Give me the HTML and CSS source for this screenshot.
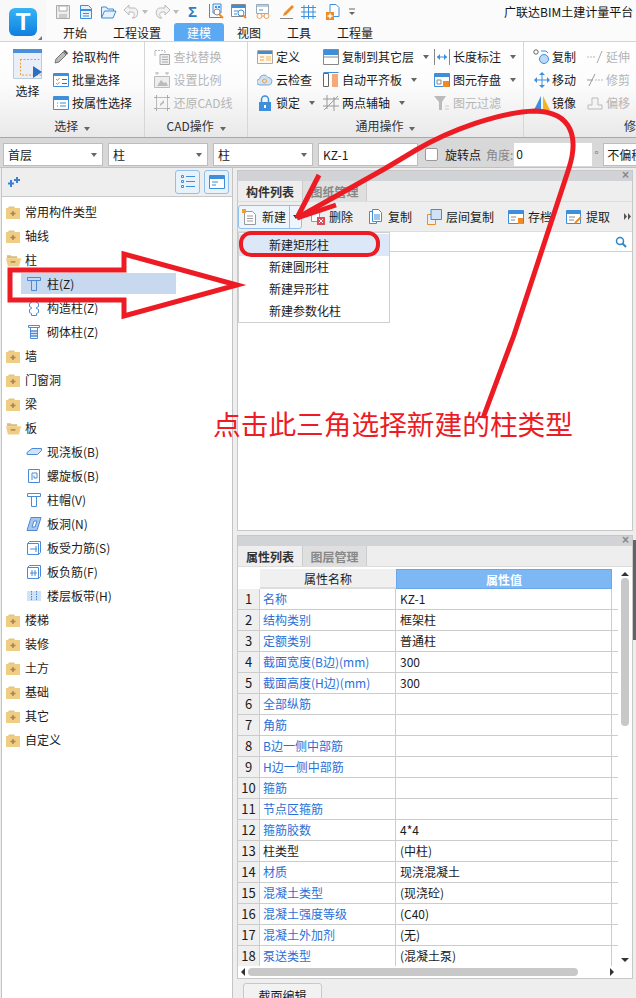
FILE: index.html
```html
<!DOCTYPE html>
<html lang="zh-CN">
<head>
  <meta charset="UTF-8" />
  <title>广联达BIM土建计量平台</title>
  <link rel="stylesheet" href="styles.css">
</head>
<body>
<svg class="defs" width="0" height="0">
  <symbol id="shut" viewBox="0 0 15 13"><path d="M2 2l1-1.500h5l1 1.500z" fill="#e3c48c"/><path d="M0 2h14v11H0z" fill="#f0cd84"/><path d="M4.500 7.500h5M7 5v5" stroke="#a88444" stroke-width="1.500"/></symbol>
  <symbol id="open" viewBox="0 0 16 13"><path d="M1 1h4l1 1h6v2H1z" fill="#dcbc82"/><path d="M0 4h16l-2 9H2z" fill="#f0cd84"/><path d="M5 8h5" stroke="#a88444" stroke-width="1.500"/></symbol>
  <symbol id="cap" viewBox="0 0 16 16"><path d="M1.500 1.500h13v3h-13zM5.500 4.500v10h5v-10z" fill="none" stroke="#4a8ad8"/></symbol>
</svg>
<div class="app">

  <!-- TITLE + TABS -->
  <div class="top">
    <div class="logo-box">
      <div class="logo">T</div>
      <svg class="logo-corner" width="4" height="4"><path d="M4 0V4H0z" fill="#777"/></svg>
    </div>
    <div class="top-right">
      <div class="quick">
        <svg class="q1" width="16" height="16" viewBox="0 0 16 16"><path d="M1.500 1.500h13v13h-13z" fill="#eee" stroke="#aaa"/><path d="M4 2h8v5H4z" fill="#fff" stroke="#aaa"/><path d="M4 10h8v4H4z" fill="#ccc"/></svg>
        <svg class="q2" width="16" height="16" viewBox="0 0 16 16"><path d="M2.500 1.500h8l3 3v10h-11z" fill="#e8f2fc" stroke="#3d8edb"/><path d="M3 5h10v2H3z" fill="#3d8edb"/><path d="M5 9.500h6M5 12h6" stroke="#3d8edb"/></svg>
        <svg class="q3" width="17" height="16" viewBox="0 0 17 16"><path d="M1.500 14V3h5l1 2h6v2" fill="#e8f2fc" stroke="#3d8edb"/><path d="M1.500 14l3-7h11.500l-3 7z" fill="#e8f2fc" stroke="#3d8edb"/></svg>
        <svg class="q3" width="17" height="16" viewBox="0 0 17 16"><path d="M1 6l5-5v3h5c5 0 5 9 0 10H9c3-1 3-6 0-6H6v3z" fill="#f2f2f2" stroke="#bbb"/></svg>
        <span class="caret light"></span>
        <svg class="q3" width="17" height="16" viewBox="0 0 17 16"><path d="M16 6l-5-5v3H6C1 4 1 13 6 14h2C5 13 5 8 8 8h3v3z" fill="#f2f2f2" stroke="#bbb"/></svg>
        <span class="caret light"></span>
        <span class="sigma">Σ</span>
        <svg class="q1" width="16" height="17" viewBox="0 0 16 17"><path d="M1.500 1v13.500H14" fill="none" stroke="#3d8edb"/><path d="M5 1h8v9H5z" fill="#e8f2fc" stroke="#3d8edb"/><path d="M7 3h2v2H7zM10 3h2v2h-2z" fill="#3d8edb"/><circle cx="9" cy="9" r="3" fill="#fff" stroke="#888"/><path d="M11 11l4 4" stroke="#f08a24" stroke-width="2"/></svg>
        <svg class="q2" width="16" height="17" viewBox="0 0 16 17"><path d="M.5 1.500h14v12H.5z" fill="#fff" stroke="#888"/><path d="M1 2h13v3H1z" fill="#3d8edb"/><path d="M3 8h4M3 11h3" stroke="#3d8edb"/><circle cx="10" cy="10" r="3" fill="#fff" stroke="#3d8edb"/><path d="M12 12l3 3" stroke="#f08a24" stroke-width="2"/></svg>
        <svg class="q4" width="16" height="17" viewBox="0 0 16 17"><path d="M1.500 1.500h12v9h-12z" fill="#fff" stroke="#9ab"/><path d="M2 2h11v2H2z" fill="#bcd"/><path d="M4 7h4" stroke="#3d8edb"/><circle cx="4.500" cy="13" r="2.500" fill="none" stroke="#e9a25f"/><circle cx="11.500" cy="13" r="2.500" fill="none" stroke="#e9a25f"/><path d="M7 13h2" stroke="#e9a25f"/></svg>
        <svg class="q4" width="16" height="16" viewBox="0 0 16 16"><path d="M5 9l8-8 2 2-8 8-3 1z" fill="#f08a24"/><path d="M1 14.500h13" stroke="#888"/></svg>
        <svg class="q5" width="17" height="16" viewBox="0 0 17 16"><path d="M1 3.500h15M1 8h15M1 12.500h15M4 1v14M8.500 1v14M13 1v14" stroke="#3d8edb" fill="none"/></svg>
        <svg class="q6" width="14" height="16" viewBox="0 0 14 16"><path d="M4 .5h6l3 3v9H4z" fill="#fff" stroke="#3d8edb"/><path d="M0 8h8v8H0z" fill="#f08a24"/><path d="M4 9.500v5M1.500 12h5" stroke="#fff" stroke-width="1.500"/></svg>
        <svg class="q6" width="6" height="8" viewBox="0 0 6 8"><path d="M0 1h6" stroke="#666"/><path d="M0 4h6L3 7z" fill="#666"/></svg>
        <span class="win-title">广联达BIM土建计量平台</span>
      </div>
      <div class="tabs">
        <span class="tab t1">开始</span>
        <span class="tab t2">工程设置</span>
        <span class="tab active">建模</span>
        <span class="tab t3">视图</span>
        <span class="tab t4">工具</span>
        <span class="tab t5">工程量</span>
      </div>
    </div>
  </div>

  <!-- RIBBON -->
  <div class="ribbon">
    <div class="group g-select">
      <div class="group-body">
        <div class="big-btn">
          <svg width="30" height="30" viewBox="0 0 30 30"><path d="M.5.500h28v29H.500z" fill="#e9eef8" stroke="#bcd"/><path d="M0 0h29v4H0z" fill="#4a90d9"/><path d="M7 10.500h21M7.500 10v16h21" fill="none" stroke="#f0a030" stroke-dasharray="2 1.500"/><path d="M20 17l9 6-9 6z" fill="#2a6fc0"/></svg>
          <span>选择</span>
        </div>
        <div class="col">
          <div class="item"><svg width="16" height="16" viewBox="0 0 16 16"><path d="M2 14l1-4 7-7 3 3-7 7z" fill="#bbb" stroke="#777"/><path d="M10 2l2-1 3 3-1 2z" fill="#555"/></svg>拾取构件</div>
          <div class="item"><svg width="16" height="16" viewBox="0 0 16 16"><path d="M.5 1.500h15v13H.5z" fill="#fff" stroke="#3d8edb"/><path d="M1 2h14v2H1z" fill="#3d8edb"/><path d="M3 7l1.500 1.500L6.500 6M3 11l1.500 1.500L6.500 10" fill="none" stroke="#f08a24"/><path d="M9 7.500h5M9 11.500h5" stroke="#666"/></svg>批量选择</div>
          <div class="item"><svg width="16" height="16" viewBox="0 0 16 16"><path d="M.5 1.500h15v13H.5z" fill="#fff" stroke="#3d8edb"/><path d="M1 2h14v3H1z" fill="#3d8edb"/><path d="M4 8h1M7 8h6M4 11h1M7 11h6" stroke="#3d8edb"/></svg>按属性选择</div>
        </div>
      </div>
      <div class="group-label">选择<span class="caret"></span></div>
    </div>

    <div class="group g-cad">
      <div class="group-body">
        <div class="col off">
          <div class="item"><svg width="16" height="16" viewBox="0 0 16 16"><path d="M1 1.500h10" stroke="#bbb" stroke-dasharray="2 1"/><path d="M1 2v5M11 2v2" stroke="#bbb"/><path d="M6 5.500h9.500v10H6z" fill="#eee" stroke="#aaa"/><path d="M8 8h6M8 10.500h6M8 13h6" stroke="#aaa"/></svg>查找替换</div>
          <div class="item"><svg width="16" height="16" viewBox="0 0 16 16"><path d="M.5 4.500h15v11H.5z" fill="#eee" stroke="#bbb"/><path d="M3 14l4-6 3 3 2-1 2 4z" fill="#bbb"/><path d="M1 1h4M11 1h4M3 0v3M13 0v3" stroke="#bbb"/></svg>设置比例</div>
          <div class="item"><svg width="16" height="16" viewBox="0 0 16 16"><path d="M2.500 2.500h11v11h-11z" fill="none" stroke="#bbb"/><path d="M0 2.500h3M13 2.500h3M0 13.500h3M13 13.500h3M2.500 0v3M13.500 0v3M2.500 13v3M13.500 13v3" stroke="#aaa"/><path d="M6 9l4-4v3l-4 3z" fill="#bbb"/></svg>还原CAD线</div>
        </div>
      </div>
      <div class="group-label">CAD操作<span class="caret"></span></div>
    </div>

    <div class="group g-common">
      <div class="group-body">
        <div class="col c1">
          <div class="item"><svg width="16" height="16" viewBox="0 0 16 16"><path d="M.5 1.500h15v13H.5z" fill="#fdf7ee" stroke="#aaa"/><path d="M1 2h14v3H1z" fill="#3d8edb"/><path d="M3 8h4M3 11h4" stroke="#f0a030"/><path d="M9 7h5v5H9z" fill="#f7d9a8"/></svg>定义</div>
          <div class="item"><svg width="16" height="16" viewBox="0 0 16 16"><path d="M3 13a3 3 0 0 1-.5-6A4.500 4.500 0 0 1 11 5.500a3.800 3.800 0 0 1 1 7.500z" fill="#cfe2f6" stroke="#7aa9d8"/><circle cx="7.500" cy="9" r="2" fill="none" stroke="#f0a030"/></svg>云检查</div>
          <div class="item"><svg width="16" height="16" viewBox="0 0 16 16"><path d="M4.500 7V4.500a3.500 3.500 0 0 1 7 0V7" fill="none" stroke="#3d8edb" stroke-width="1.500"/><path d="M2 7h12v9H2z" fill="#3d8edb"/><path d="M8 10v3" stroke="#fff" stroke-width="2"/></svg>锁定<span class="caret"></span></div>
        </div>
        <div class="col c2">
          <div class="item"><svg width="16" height="16" viewBox="0 0 16 16"><path d="M.5 .5h15v15H.5z" fill="#fff" stroke="#888"/><path d="M1 1h14v5H1z" fill="#3d8edb"/><path d="M1 8h14" stroke="#888"/></svg>复制到其它层<span class="caret"></span></div>
          <div class="item"><svg width="16" height="16" viewBox="0 0 16 16"><path d="M.5 1.500h5v13h-5z" fill="#fff" stroke="#666"/><path d="M.5.500h15" stroke="#3d8edb"/><path d="M9 2h6v13H9z" fill="#f7a878"/></svg>自动平齐板<span class="caret"></span></div>
          <div class="item"><svg width="16" height="16" viewBox="0 0 16 16"><path d="M4 0v14M0 4h16M0 11h16M11 2v14" stroke="#999" fill="none"/><path d="M1 15L15 1" stroke="#f08a24"/></svg>两点辅轴<span class="caret"></span></div>
        </div>
        <div class="col c3">
          <div class="item"><svg width="16" height="16" viewBox="0 0 16 16"><path d="M.5 0v16M15.500 0v16" stroke="#888"/><path d="M3 8h10" stroke="#3d8edb"/><path d="M3 8l3-3v6zM13 8l-3-3v6z" fill="#3d8edb"/></svg>长度标注<span class="caret"></span></div>
          <div class="item"><svg width="16" height="16" viewBox="0 0 16 16"><path d="M.5 1.500h15v13H.5z" fill="#fff" stroke="#3d8edb"/><path d="M1 2h14v3H1z" fill="#3d8edb"/><path d="M3 8h4v4H3z" fill="none" stroke="#888"/><path d="M9 9h6v6H9z" fill="#f08a24"/></svg>图元存盘<span class="caret"></span></div>
          <div class="item off"><svg width="16" height="16" viewBox="0 0 16 16"><path d="M0 1h12L8 7v8H5V7z" fill="#bbb"/><path d="M11 14h4M11 11h4" stroke="#ccc"/></svg>图元过滤</div>
        </div>
      </div>
      <div class="group-label">通用操作<span class="caret"></span></div>
    </div>

    <div class="group g-edit">
      <div class="group-body">
        <div class="col c4">
          <div class="item"><svg width="18" height="16" viewBox="0 0 18 16"><circle cx="3" cy="3" r="2.200" fill="none" stroke="#666"/><circle cx="11" cy="10" r="4.500" fill="#bcd9f3" stroke="#3d8edb"/><path d="M8 2h5l2 2" fill="none" stroke="#3d8edb"/></svg>复制</div>
          <div class="item"><svg width="18" height="16" viewBox="0 0 18 16"><path d="M9 0l3 3H6zM9 16l-3-3h6zM1 8l3-3v6zM17 8l-3-3v6z" fill="#3d8edb"/><path d="M4 8h10M9 3v10" stroke="#3d8edb"/></svg>移动</div>
          <div class="item"><svg width="18" height="16" viewBox="0 0 18 16"><path d="M8 1v14H1z" fill="#3d8edb"/><path d="M10 1v14h7z" fill="#f5b324"/></svg>镜像</div>
        </div>
        <div class="col c5 off">
          <div class="item"><svg width="16" height="16" viewBox="0 0 16 16"><path d="M0 8h8" stroke="#bbb" stroke-dasharray="2 1"/><path d="M10 14L15 2" stroke="#aaa"/></svg>延伸</div>
          <div class="item"><svg width="16" height="16" viewBox="0 0 16 16"><path d="M8 8h8" stroke="#bbb" stroke-dasharray="2 1"/><path d="M2 14L8 2M0 8h6" stroke="#999"/></svg>修剪</div>
          <div class="item"><svg width="16" height="16" viewBox="0 0 16 16"><path d="M1 14h14v-4h-4V3H5v7H1z" fill="#f4f4f4" stroke="#bbb"/></svg>偏移</div>
        </div>
      </div>
      <div class="group-label lab-edit">修</div>
    </div>
  </div>

  <!-- SELECTORS -->
  <div class="combos">
    <div class="combo">首层</div>
    <div class="combo">柱</div>
    <div class="combo">柱</div>
    <div class="combo">KZ-1</div>
    <span class="check"></span>
    <span class="rot">旋转点</span>
    <span class="ang">角度:</span>
    <div class="ang-input">0</div>
    <span class="deg">°</span>
    <div class="offset">不偏移</div>
  </div>

  <div class="main">
    <!-- LEFT TREE -->
    <div class="side">
      <div class="side-head">
        <svg class="sparks" width="12" height="10" viewBox="0 0 12 10"><path d="M3 3v7M0 6.500h6M9 0v6M6 3h6" stroke="#3d7fd0" stroke-width="2"/></svg>
        <span class="side-btn"><svg width="14" height="14" viewBox="0 0 14 14"><path d="M.5 .5h2v2h-2zM.5 5.500h2v2h-2zM.5 10.500h2v2h-2z" fill="none" stroke="#3d8edb"/><path d="M5 1.500h9M5 6.500h9M5 11.500h9" stroke="#3d8edb"/></svg></span>
        <span class="side-btn"><svg width="16" height="14" viewBox="0 0 16 14"><path d="M.5.500h15v13H.5z" fill="#fff" stroke="#3d8edb"/><path d="M1 1h14v3H1z" fill="#3d8edb"/><path d="M3 7h6M3 10h4" stroke="#3d8edb"/></svg></span>
      </div>
      <div class="tree">
        <div class="node"><svg class="fd"><use href="#shut"/></svg><span>常用构件类型</span></div>
        <div class="node"><svg class="fd"><use href="#shut"/></svg><span>轴线</span></div>
        <div class="node"><svg class="fd"><use href="#open"/></svg><span>柱</span></div>
        <div class="node child sel"><svg class="ci"><use href="#cap"/></svg><span>柱(Z)</span></div>
        <div class="node child"><svg width="16" height="16" viewBox="0 0 16 16" fill="none" stroke="#4a8ad8"><path d="M5.500.5h5v2l2 1v3l-2 1v1l2 1v3l-2 1v2h-5v-2l-2-1v-3l2-1v-1l-2-1v-3l2-1z"/></svg><span>构造柱(Z)</span></div>
        <div class="node child"><svg width="16" height="16" viewBox="0 0 16 16" fill="none" stroke="#4a8ad8"><path d="M2.500 1.500h11v2h-11zM4.500 3.500h7v11h-7z"/><path d="M5 7h6M5 9.500h6M5 12h6" stroke-width="1.500"/></svg><span>砌体柱(Z)</span></div>
        <div class="node"><svg class="fd"><use href="#shut"/></svg><span>墙</span></div>
        <div class="node"><svg class="fd"><use href="#shut"/></svg><span>门窗洞</span></div>
        <div class="node"><svg class="fd"><use href="#shut"/></svg><span>梁</span></div>
        <div class="node"><svg class="fd"><use href="#open"/></svg><span>板</span></div>
        <div class="node child"><svg width="16" height="16" viewBox="0 0 16 16" fill="none" stroke="#4a8ad8"><path d="M1 8.500l5-4h9.500v2l-4 4H1z" fill="#cfe2f6"/></svg><span>现浇板(B)</span></div>
        <div class="node child"><svg width="16" height="16" viewBox="0 0 16 16" fill="none" stroke="#4a8ad8"><path d="M2.500 1.500h11v13h-11zM6 12V5h5v5H8V7.500"/></svg><span>螺旋板(B)</span></div>
        <div class="node child"><svg class="ci"><use href="#cap"/></svg><span>柱帽(V)</span></div>
        <div class="node child"><svg width="16" height="16" viewBox="0 0 16 16" stroke="#4a8ad8"><path d="M1 14.500l4-13h10l-4 13z" fill="#a9c6ec"/><path d="M6 11l2-6h3l-2 6z" fill="#fff"/></svg><span>板洞(N)</span></div>
        <div class="node child"><svg width="16" height="16" viewBox="0 0 16 16" fill="none" stroke="#4a8ad8"><path d="M1.500 3.500h11v11h-11zM1.500 3.500l2-2h11v11l-2 2M4 9h7M10 6v6"/></svg><span>板受力筋(S)</span></div>
        <div class="node child"><svg width="16" height="16" viewBox="0 0 16 16" fill="none" stroke="#4a8ad8"><path d="M1.500 3.500h11v11h-11zM1.500 3.500l2-2h11v11l-2 2M4 9h7M6 6v6M9 6v6"/></svg><span>板负筋(F)</span></div>
        <div class="node child"><svg width="16" height="16" viewBox="0 0 16 16"><path d="M1 3h14v10H1z" fill="#cfe2f6"/><path d="M5.500 3v10M10.500 3v10" stroke="#4a8ad8" stroke-dasharray="1.500 1"/></svg><span>楼层板带(H)</span></div>
        <div class="node"><svg class="fd"><use href="#shut"/></svg><span>楼梯</span></div>
        <div class="node"><svg class="fd"><use href="#shut"/></svg><span>装修</span></div>
        <div class="node"><svg class="fd"><use href="#shut"/></svg><span>土方</span></div>
        <div class="node"><svg class="fd"><use href="#shut"/></svg><span>基础</span></div>
        <div class="node"><svg class="fd"><use href="#shut"/></svg><span>其它</span></div>
        <div class="node"><svg class="fd"><use href="#shut"/></svg><span>自定义</span></div>
      </div>
    </div>

    <!-- RIGHT PANELS -->
    <div class="right">
      <div class="panel list-panel">
        <div class="strip"><span class="close">×</span></div>
        <div class="ptabs"><span class="ptab on">构件列表</span><span class="ptab">图纸管理</span></div>
        <div class="toolbar">
          <div class="split">
            <span class="split-main"><svg width="15" height="16" viewBox="0 0 15 16"><path d="M2.500 2.500h8l3 3v10h-11z" fill="#fff" stroke="#999"/><path d="M5 7h6M5 9.500h6M5 12h6" stroke="#999"/><path d="M0 0h4v4H0z" fill="#f0a030"/></svg>新建</span>
            <span class="split-arrow"><span class="caret dark"></span></span>
          </div>
          <span class="tool t-del"><svg width="15" height="16" viewBox="0 0 15 16"><path d="M1.500 1.500h8v11h-8z" fill="#fff" stroke="#999"/><path d="M7 8h8v8H7z" fill="#d8505a"/><path d="M9 10l4 4M13 10l-4 4" stroke="#fff"/></svg>删除</span>
          <span class="tool t-copy"><svg width="13" height="16" viewBox="0 0 13 16"><path d="M.5 2.500h7v12h-7z" fill="#fff" stroke="#3d8edb"/><path d="M3.500 .5h6l3 3v9h-9z" fill="#fff" stroke="#3d8edb"/><path d="M5 6h6M5 8h6M5 10h6" stroke="#3d8edb"/></svg>复制</span>
          <span class="tool t-floor"><svg width="15" height="16" viewBox="0 0 15 16"><path d="M.5 5.500h8v10h-8z" fill="none" stroke="#f08a24"/><path d="M4 .5h10.500v10H4z" fill="#cfe2f6" stroke="#3d8edb"/></svg>层间复制</span>
          <span class="tool t-save"><svg width="16" height="16" viewBox="0 0 16 16"><path d="M.5 1.500h15v13H.5z" fill="#fff" stroke="#3d8edb"/><path d="M1 2h14v3H1z" fill="#3d8edb"/><path d="M3 8h5M3 11h4" stroke="#888"/><path d="M10 9h5v6h-5z" fill="#f08a24"/></svg>存档</span>
          <span class="tool t-get"><svg width="16" height="16" viewBox="0 0 16 16"><path d="M.5 1.500h14v13H.5z" fill="#fff" stroke="#3d8edb"/><path d="M1 2h13v3H1z" fill="#3d8edb"/><path d="M3 8h6M3 11h5" stroke="#888"/><path d="M9 14l6-6" stroke="#f08a24" stroke-width="2"/></svg>提取</span>
          <svg class="tool-more" width="7" height="7" viewBox="0 0 7 7"><path d="M0 0l3 3.500L0 7zM4 0l3 3.500L4 7z" fill="#555"/></svg>
        </div>
        <div class="search"><svg width="12" height="12" viewBox="0 0 12 12"><circle cx="5" cy="5" r="3.500" fill="none" stroke="#2f86c5" stroke-width="1.500"/><path d="M7.500 7.500L11 11" stroke="#2f86c5" stroke-width="2"/></svg></div>
        <div class="menu">
          <div class="menu-item hot">新建矩形柱</div>
          <div class="menu-item">新建圆形柱</div>
          <div class="menu-item">新建异形柱</div>
          <div class="menu-item">新建参数化柱</div>
        </div>
      </div>

      <div class="panel prop-panel">
        <div class="strip"><span class="close">×</span></div>
        <div class="ptabs"><span class="ptab on">属性列表</span><span class="ptab">图层管理</span></div>
        <div class="grid-wrap">
          <div class="grid-inner">
            <div class="grid-head"><span class="corner"></span><span class="hname">属性名称</span><span class="hval">属性值</span></div>
            <div class="row"><span class="no">1</span><span class="name">名称</span><span class="val">KZ-1</span></div>
            <div class="row"><span class="no">2</span><span class="name">结构类别</span><span class="val">框架柱</span></div>
            <div class="row"><span class="no">3</span><span class="name">定额类别</span><span class="val">普通柱</span></div>
            <div class="row"><span class="no">4</span><span class="name">截面宽度(B边)(mm)</span><span class="val">300</span></div>
            <div class="row"><span class="no">5</span><span class="name">截面高度(H边)(mm)</span><span class="val">300</span></div>
            <div class="row"><span class="no">6</span><span class="name">全部纵筋</span><span class="val"></span></div>
            <div class="row"><span class="no">7</span><span class="name">角筋</span><span class="val"></span></div>
            <div class="row"><span class="no">8</span><span class="name">B边一侧中部筋</span><span class="val"></span></div>
            <div class="row"><span class="no">9</span><span class="name">H边一侧中部筋</span><span class="val"></span></div>
            <div class="row"><span class="no">10</span><span class="name">箍筋</span><span class="val"></span></div>
            <div class="row"><span class="no">11</span><span class="name">节点区箍筋</span><span class="val"></span></div>
            <div class="row"><span class="no">12</span><span class="name">箍筋胶数</span><span class="val">4*4</span></div>
            <div class="row"><span class="no">13</span><span class="name plain">柱类型</span><span class="val">(中柱)</span></div>
            <div class="row"><span class="no">14</span><span class="name">材质</span><span class="val">现浇混凝土</span></div>
            <div class="row"><span class="no">15</span><span class="name">混凝土类型</span><span class="val">(现浇砼)</span></div>
            <div class="row"><span class="no">16</span><span class="name">混凝土强度等级</span><span class="val">(C40)</span></div>
            <div class="row"><span class="no">17</span><span class="name">混凝土外加剂</span><span class="val">(无)</span></div>
            <div class="row"><span class="no">18</span><span class="name">泵送类型</span><span class="val">(混凝土泵)</span></div>
          </div>
          <div class="vbar"><span class="up"></span><span class="thumb"></span><span class="down"></span></div>
        </div>
        <div class="hbar"><span class="left-a"></span><span class="hthumb"></span><span class="right-a"></span></div>
      </div>
      <div class="bottom-tab"><span>截面编辑</span></div>
    </div>
  </div>

  <div class="edge-bar"></div>

  <!-- RED ANNOTATIONS -->
  <svg class="marks" width="636" height="998" viewBox="0 0 636 998">
    <path d="M10 270H124V254L237 285L124 316V300H10Z" fill="none" stroke="#ed1c24" stroke-width="5"/>
    <rect x="241" y="233" width="137" height="22" rx="10" fill="none" stroke="#ed1c24" stroke-width="4"/>
    <path d="M483 418L514 335L569 168C578 140 574 112 535 111C500 112 450 130 416 150L386 168L297 218" fill="none" stroke="#ed1c24" stroke-width="5"/>
    <path d="M297 218L319 175M297 218L336 205" fill="none" stroke="#ed1c24" stroke-width="5"/>
  </svg>
  <div class="note">点击此三角选择新建的柱类型</div>
</div>
</body>
</html>
```

FILE: styles.css
```css
* {
  box-sizing: border-box;
}
html, body {
  margin: 0;
  height: 100%;
  overflow: hidden;
}
body {
  font-family: "Noto Sans CJK SC", "Liberation Sans", sans-serif;
  font-size: 12px;
  color: #1a1a1a;
  background: #eee;
}
svg {
  display: block;
  flex: none;
}
.defs {
  position: absolute;
}
.app {
  position: relative;
  width: 636px;
  height: 998px;
  overflow: hidden;
}

/* top */
.top {
  display: flex;
  height: 41px;
  background: #fbfbfb;
}
.logo-box {
  position: relative;
  width: 46px;
  height: 41px;
  padding: 8px 9px;
  background: #f8f8f8;
}
.logo {
  width: 28px;
  height: 28px;
  border-radius: 6px;
  background: linear-gradient(#37b4f5, #0f7fe0);
  color: #fff;
  font: bold 24px/28px "Liberation Sans", sans-serif;
  text-align: center;
}
.logo-corner {
  position: absolute;
  right: 4px;
  bottom: 1px;
}
.top-right {
  flex: 1;
  min-width: 0;
}
.quick {
  display: flex;
  align-items: center;
  height: 23px;
  white-space: nowrap;
}
.q1 { margin-left: 9px; }
.q2 { margin-left: 7px; }
.q3 { margin-left: 6px; }
.q4 { margin-left: 8px; }
.q5 { margin-left: 5px; }
.q6 { margin-left: 9px; }
.caret {
  display: inline-block;
  width: 0;
  height: 0;
  margin-left: 6px;
  border: 3.5px solid transparent;
  border-top: 4px solid #666;
  border-bottom: 0;
}
.caret.light {
  border-top-color: #bbb;
  margin-left: 2px;
}
.caret.dark {
  margin: 0;
  border-top-color: #333;
}
.sigma {
  margin-left: 9px;
  width: 11px;
  color: #2a7fc8;
  font: bold 15px/16px "Liberation Sans", sans-serif;
}
.win-title {
  margin-left: 149px;
  line-height: 16px;
  color: #111;
}
.tabs {
  display: flex;
  height: 18px;
  line-height: 19px;
  font-size: 12px;
}
.t1 { margin-left: 17px; }
.t2 { margin-left: 26px; }
.t3 { margin-left: 13px; }
.t4 { margin-left: 26px; }
.t5 { margin-left: 26px; }
.tab.active {
  margin-left: 13px;
  width: 50px;
  height: 18px;
  background: #5aa9f2;
  color: #fff;
  text-align: center;
  border-radius: 3px 3px 0 0;
}

/* ribbon */
.ribbon {
  display: flex;
  height: 97px;
  background: linear-gradient(#fff, #fcfcfc 45%, #e9e9e9);
  border-top: 1px solid #d4d4d4;
  border-bottom: 1px solid #a8a8a8;
}
.group {
  display: flex;
  flex-direction: column;
  padding-top: 3px;
}
.group-body {
  display: flex;
  flex: 1;
}
.group-label {
  height: 20px;
  line-height: 18px;
  text-align: center;
  color: #333;
}
.g-select, .g-cad, .g-common {
  border-right: 1px solid #d6d6d6;
}
.g-select { width: 146px; }
.g-cad { width: 103px; }
.g-common { width: 276px; }
.g-edit { flex: 1; }
.big-btn {
  display: flex;
  flex-direction: column;
  align-items: center;
  width: 53px;
  padding: 4px 0 0 2px;
  line-height: 20px;
}
.big-btn span {
  padding-top: 2px;
}
.col {
  display: flex;
  flex-direction: column;
}
.item {
  display: flex;
  align-items: center;
  height: 23px;
  gap: 3px;
  white-space: nowrap;
}
.off, .off .item {
  color: #b5b5b5;
}
.g-cad .col { padding-left: 9px; }
.c1 { width: 75px; padding-left: 9px; }
.c2 { width: 111px; }
.c3 { width: 89px; }
.c4 { width: 63px; padding-left: 9px; }
.c4 .item { gap: 1px; }
.lab-edit { padding-left: 100px; }

/* combo bar */
.combos {
  display: flex;
  align-items: center;
  height: 30px;
  padding: 3px 0 0 3px;
  background: #d8d8d9;
  border-bottom: 1px solid #c0c0c0;
  white-space: nowrap;
}
.combo {
  position: relative;
  flex: none;
  width: 100px;
  height: 23px;
  margin-right: 5px;
  padding-left: 4px;
  line-height: 21px;
  background: #fff;
  border: 1px solid #bdbdbd;
}
.combo:after {
  content: "";
  position: absolute;
  right: 5px;
  top: 9px;
  border: 3.5px solid transparent;
  border-top: 4px solid #666;
  border-bottom: 0;
}
.check {
  flex: none;
  width: 13px;
  height: 13px;
  margin-left: 2px;
  background: #fff;
  border: 1px solid #999;
  border-radius: 2px;
}
.rot { flex: none; margin-left: 7px; }
.ang { flex: none; margin-left: 5px; color: #888; }
.ang-input {
  flex: none;
  width: 78px;
  height: 23px;
  margin-left: 1px;
  padding-left: 2px;
  line-height: 22px;
  background: #fff;
}
.deg { flex: none; margin-left: 2px; width: 9px; color: #777; }
.offset {
  flex: none;
  width: 40px;
  height: 23px;
  padding-left: 3px;
  line-height: 21px;
  background: #fff;
  border: 1px solid #bdbdbd;
  overflow: hidden;
}

/* left side */
.main {
  display: flex;
  height: 830px;
  background: #eee;
}
.side {
  flex: none;
  width: 232px;
  margin-left: 1px;
  background: #fff;
  border-left: 1px solid #c4c4c4;
  border-right: 1px solid #c4c4c4;
}
.side-head {
  display: flex;
  align-items: center;
  height: 29px;
  padding-right: 3px;
  background: #eee;
  border-bottom: 1px solid #c8c8c8;
  gap: 4px;
}
.sparks {
  margin: 0 auto 0 6px;
}
.side-btn {
  display: flex;
  align-items: center;
  justify-content: center;
  width: 25px;
  height: 24px;
  background: #e8f2fb;
  border: 1px solid #8fc0ee;
  border-radius: 3px;
}
.tree {
  padding-top: 3px;
}
.node {
  display: flex;
  align-items: center;
  height: 24px;
  padding-left: 4px;
  gap: 4px;
  line-height: 24px;
}
.node.child {
  padding-left: 24px;
  gap: 5px;
}
.fd {
  width: 15px;
  height: 13px;
}
.ci {
  width: 16px;
  height: 16px;
}
.node.sel {
  position: relative;
}
.node.sel:before {
  content: "";
  position: absolute;
  left: 19px;
  top: 1px;
  width: 155px;
  height: 21px;
  background: #c8d8ee;
}
.node.sel svg, .node.sel span {
  position: relative;
}

/* right side */
.right {
  flex: none;
  width: 396px;
  margin-left: 4px;
}
.panel {
  position: relative;
  background: #fff;
  border: 1px solid #c8c8c8;
}
.list-panel {
  height: 361px;
  margin-top: 2px;
}
.prop-panel {
  height: 444px;
  margin-top: 4px;
}
.strip {
  position: relative;
  height: 10px;
  background: #d2d3d7;
}
.close {
  position: absolute;
  right: 3px;
  top: -3px;
  color: #888;
  font: bold 12px/14px "Liberation Sans", sans-serif;
}
.ptabs {
  display: flex;
  height: 21px;
  background: #eee;
  border-bottom: 1px solid #ddd;
}
.ptab {
  width: 65px;
  line-height: 21px;
  text-align: center;
  color: #888;
  font-weight: bold;
  background: #dfdfdf;
  border-left: 1px solid #ccc;
  border-right: 1px solid #ccc;
}
.ptab.on {
  width: 64px;
  color: #333;
  background: #eee;
  border: 0;
}
.toolbar {
  display: flex;
  align-items: center;
  height: 30px;
  background: #eee;
  border-bottom: 1px solid #ddd;
  white-space: nowrap;
}
.split {
  display: flex;
  width: 64px;
  height: 24px;
  background: #eef5fc;
  border: 1px solid #8fc0ee;
  border-radius: 3px;
}
.split-main {
  display: flex;
  align-items: center;
  gap: 5px;
  width: 51px;
  padding-left: 3px;
  border-right: 1px solid #8fc0ee;
}
.split-arrow {
  display: flex;
  flex: 1;
  align-items: center;
  justify-content: center;
}
.tool {
  display: flex;
  align-items: center;
  gap: 4px;
}
.t-del { margin-left: 8px; }
.t-copy { margin-left: 16px; gap: 6px; }
.t-floor { margin-left: 15px; }
.t-save { margin-left: 14px; gap: 4px; }
.t-get { margin-left: 14px; gap: 4px; }
.tool-more {
  margin-left: 14px;
}
.search {
  display: flex;
  align-items: center;
  justify-content: flex-end;
  height: 20px;
  padding-right: 5px;
  border-bottom: 1px solid #d0d0d0;
}
.menu {
  position: absolute;
  left: 0;
  top: 61px;
  width: 152px;
  height: 91px;
  padding: 1px 0;
  background: #fff;
  border: 1px solid #d0d0d0;
}
.menu-item {
  height: 22px;
  padding-left: 30px;
  line-height: 22px;
}
.menu-item.hot {
  background: #dce8f8;
}

/* property grid */
.grid-wrap {
  display: flex;
  height: 399px;
}
.grid-inner {
  width: 380px;
  overflow: hidden;
}
.grid-head {
  display: flex;
  height: 20px;
  margin-top: 2px;
  line-height: 19px;
  text-align: center;
}
.corner {
  width: 22px;
}
.hname {
  width: 136px;
  background: #f0f0f0;
  border-bottom: 2px solid #ddd;
}
.hval {
  width: 216px;
  color: #fff;
  font-weight: bold;
  background: #7db8f5;
  border: 1px solid #68a8ea;
}
.row {
  display: flex;
  height: 21px;
  line-height: 20px;
  border-bottom: 1px solid #ccc;
}
.row .no {
  width: 22px;
  text-align: center;
  background: #efefef;
  border-right: 1px solid #ccc;
  font-size: 13px;
}
.row .name {
  width: 136px;
  padding-left: 3px;
  border-right: 1px solid #ccc;
  color: #2a6fd8;
}
.row .name.plain {
  color: #222;
}
.row .val {
  width: 216px;
  padding-left: 4px;
  border-right: 1px solid #ccc;
}
.vbar {
  display: flex;
  flex-direction: column;
  align-items: center;
  flex: 1;
  padding-top: 5px;
}
.up {
  border: 4px solid transparent;
  border-bottom: 4px solid #333;
  border-top: 0;
}
.down {
  margin-top: auto;
  margin-bottom: 4px;
  border: 4px solid transparent;
  border-top: 4px solid #333;
  border-bottom: 0;
}
.thumb {
  width: 8px;
  height: 148px;
  margin-top: 2px;
  background: #c8c8c8;
  border-radius: 4px;
}
.hbar {
  display: flex;
  align-items: center;
  height: 12px;
  padding: 0 3px;
}
.left-a {
  border: 4px solid transparent;
  border-right: 4px solid #333;
  border-left: 0;
}
.hthumb {
  width: 330px;
  height: 8px;
  margin-left: 3px;
  background: #c8c8c8;
  border-radius: 4px;
}
.right-a {
  margin-left: 32px;
  border: 4px solid transparent;
  border-left: 4px solid #333;
  border-right: 0;
}
.bottom-tab {
  padding: 4px 0 0 6px;
}
.bottom-tab span {
  display: block;
  width: 79px;
  height: 24px;
  line-height: 23px;
  text-align: center;
  background: #f2f2f2;
  border: 1px solid #c8c8c8;
  border-radius: 3px 3px 0 0;
}

/* overlays */
.edge-bar {
  position: absolute;
  left: 633px;
  top: 540px;
  width: 3px;
  height: 100px;
  background: #5f6468;
}
.marks {
  position: absolute;
  left: 0;
  top: 0;
  pointer-events: none;
}
.note {
  position: absolute;
  left: 213px;
  top: 405px;
  color: #ed1c24;
  font: 27.7px/36px "Noto Sans CJK SC", sans-serif;
  white-space: nowrap;
}
```
